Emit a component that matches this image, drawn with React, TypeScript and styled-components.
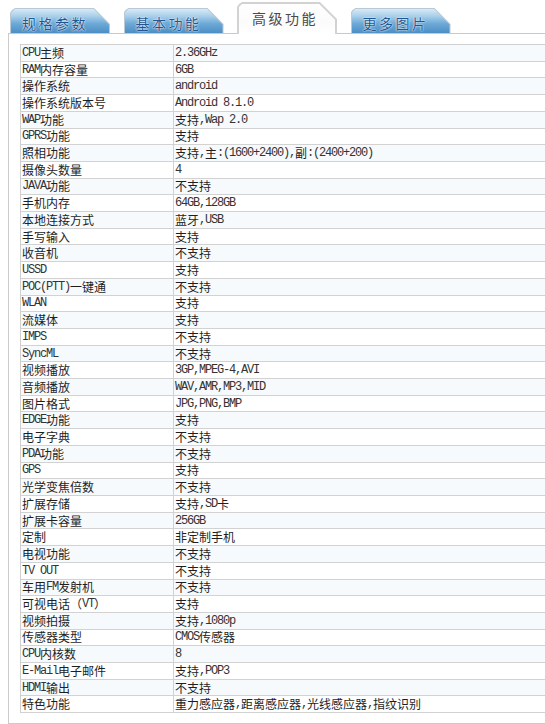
import React from "react";
import styled, { createGlobalStyle } from "styled-components";

const GlobalStyle = createGlobalStyle`
  html, body {
    margin: 0;
    padding: 0;
    background: #ffffff;
    overflow: hidden;
  }
  body {
    font-family: "Noto Sans CJK SC", "Noto Sans", sans-serif;
  }
`;

const Page = styled.div`
  box-sizing: border-box;
  width: 545px;
  padding-left: 8px;
`;

const TabBar = styled.div`
  display: flex;
  align-items: flex-end;
  gap: 13.5px;
  height: 33px;
  padding-left: 2px;
  border-bottom: 1px solid #c9c9c9;
`;

const Tab = styled.div<{ $active?: boolean }>`
  position: relative;
  flex: none;
  box-sizing: border-box;
  width: 100px;
  height: ${(p) => (p.$active ? 32 : 25)}px;
  margin-bottom: ${(p) => (p.$active ? -1 : 0)}px;
  display: flex;
  align-items: center;
  padding-left: ${(p) => (p.$active ? 15 : 12)}px;
  padding-top: ${(p) => (p.$active ? 0 : 4)}px;
  font-size: 14px;
  letter-spacing: 2.5px;
  color: ${(p) => (p.$active ? "#4a4a4a" : "#1f5790")};
  text-shadow: ${(p) =>
    p.$active ? "none" : "0 0 2px #ffffff, 0 0 1px #ffffff"};
  background: ${(p) => (p.$active ? "#d2d2d2" : "#b9c9d6")};
  clip-path: ${(p) =>
    p.$active
      ? "polygon(0 5px, 2px 2px, 5px 0, calc(100% - 17px) 0, 100% 17px, 100% 100%, 0 100%)"
      : "polygon(0 5px, 2px 2px, 5px 0, calc(100% - 16px) 0, 100% 16px, 100% 100%, 0 100%)"};

  &::before {
    content: "";
    position: absolute;
    top: ${(p) => (p.$active ? 2 : 1)}px;
    left: ${(p) => (p.$active ? 2 : 1)}px;
    right: ${(p) => (p.$active ? 2 : 1)}px;
    bottom: 0;
    background: ${(p) =>
      p.$active
        ? "linear-gradient(to bottom, #ffffff 0%, #fbfbfb 60%, #ffffff 100%)"
        : "linear-gradient(to bottom, #d9eaf5 0%, #a9cfea 30%, #6ba8d6 62%, #4c8fc5 100%)"};
    clip-path: ${(p) =>
      p.$active
        ? "polygon(0 3px, 3px 0, calc(100% - 15.8px) 0, 100% 15.8px, 100% 100%, 0 100%)"
        : "polygon(0 4px, 4px 0, calc(100% - 15.4px) 0, 100% 15.4px, 100% 100%, 0 100%)"};
  }
`;

const TabLabel = styled.span`
  position: relative;
  white-space: nowrap;
`;

const Panel = styled.div`
  border-left: 1px solid #cbcbcb;
  border-bottom: 1px solid #cbcbcb;
  padding: 10px 0 10px 11px;
`;

const SpecTable = styled.div`
  border-top: 1px solid #d0d0d0;
  border-left: 1px solid #d0d0d0;
`;

const Row = styled.div<{ $alt: boolean }>`
  display: grid;
  grid-template-columns: 153px 1fr;
  box-sizing: border-box;
  height: 16.71px;
  border-bottom: 1px solid #d2d2d2;
  background: ${(p) => (p.$alt ? "#f7fafd" : "#ffffff")};
`;

const Cell = styled.div`
  display: flex;
  align-items: center;
  padding-left: 1px;
  font-size: 12px;
  line-height: 1;
  color: #1e1e1e;
  white-space: nowrap;
  overflow: hidden;
`;

const LabelCell = styled(Cell)`
  border-right: 1px solid #d2d2d2;
`;

const Latin = styled.span`
  font-family: "Liberation Mono", monospace;
  font-size: 12px;
  letter-spacing: -1.2px;
  color: #333333;
`;

const specs: [string, string][] = [
  ["CPU主频", "2.36GHz"],
  ["RAM内存容量", "6GB"],
  ["操作系统", "android"],
  ["操作系统版本号", "Android 8.1.0"],
  ["WAP功能", "支持,Wap 2.0"],
  ["GPRS功能", "支持"],
  ["照相功能", "支持,主:(1600+2400),副:(2400+200)"],
  ["摄像头数量", "4"],
  ["JAVA功能", "不支持"],
  ["手机内存", "64GB,128GB"],
  ["本地连接方式", "蓝牙,USB"],
  ["手写输入", "支持"],
  ["收音机", "不支持"],
  ["USSD", "支持"],
  ["POC(PTT)一键通", "不支持"],
  ["WLAN", "支持"],
  ["流媒体", "支持"],
  ["IMPS", "不支持"],
  ["SyncML", "不支持"],
  ["视频播放", "3GP,MPEG-4,AVI"],
  ["音频播放", "WAV,AMR,MP3,MID"],
  ["图片格式", "JPG,PNG,BMP"],
  ["EDGE功能", "支持"],
  ["电子字典", "不支持"],
  ["PDA功能", "不支持"],
  ["GPS", "支持"],
  ["光学变焦倍数", "不支持"],
  ["扩展存储", "支持,SD卡"],
  ["扩展卡容量", "256GB"],
  ["定制", "非定制手机"],
  ["电视功能", "不支持"],
  ["TV OUT", "不支持"],
  ["车用FM发射机", "不支持"],
  ["可视电话（VT）", "支持"],
  ["视频拍摄", "支持,1080p"],
  ["传感器类型", "CMOS传感器"],
  ["CPU内核数", "8"],
  ["E-Mail电子邮件", "支持,POP3"],
  ["HDMI输出", "不支持"],
  ["特色功能", "重力感应器,距离感应器,光线感应器,指纹识别"],
];

function Mixed({ text }: { text: string }) {
  const parts = text.split(/([\x20-\x7e]+)/).filter((s) => s.length > 0);
  return (
    <>
      {parts.map((part, i) =>
        /^[\x20-\x7e]+$/.test(part) ? (
          <Latin key={i}>{part.replace(/ /g, "\u00a0")}</Latin>
        ) : (
          <span key={i}>{part}</span>
        )
      )}
    </>
  );
}

const tabs = ["规格参数", "基本功能", "高级功能", "更多图片"];

export default function App() {
  return (
    <>
      <GlobalStyle />
      <Page>
        <TabBar>
          {tabs.map((t, i) => (
            <Tab key={t} $active={i === 2}>
              <TabLabel>{t}</TabLabel>
            </Tab>
          ))}
        </TabBar>
        <Panel>
          <SpecTable>
            {specs.map(([label, value], i) => (
              <Row key={label} $alt={i % 2 === 0}>
                <LabelCell>
                  <Mixed text={label} />
                </LabelCell>
                <Cell>
                  <Mixed text={value} />
                </Cell>
              </Row>
            ))}
          </SpecTable>
        </Panel>
      </Page>
    </>
  );
}
